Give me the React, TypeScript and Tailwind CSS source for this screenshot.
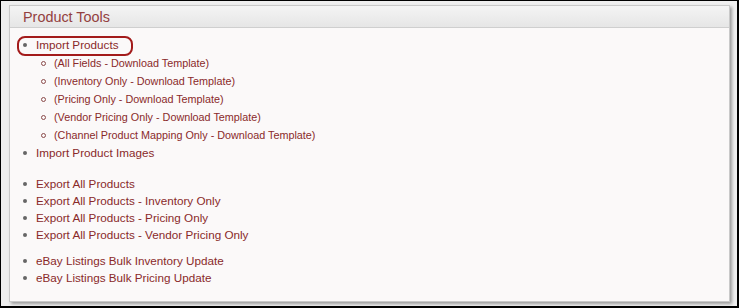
const importTemplates = [
  "(All Fields - Download Template)",
  "(Inventory Only - Download Template)",
  "(Pricing Only - Download Template)",
  "(Vendor Pricing Only - Download Template)",
  "(Channel Product Mapping Only - Download Template)",
];

const exportLinks = [
  "Export All Products",
  "Export All Products - Inventory Only",
  "Export All Products - Pricing Only",
  "Export All Products - Vendor Pricing Only",
];

const ebayLinks = ["eBay Listings Bulk Inventory Update", "eBay Listings Bulk Pricing Update"];

function Item({ label, h = "h-[18px] leading-[18px]", sub = false }: { label: string; h?: string; sub?: boolean }) {
  return (
    <li className={`flex items-center ${h} ${sub ? "pl-[31px] text-[10.8px]" : "pl-[13px] text-[11.7px]"}`}>
      {sub ? (
        <span className="mr-[8px] h-[5px] w-[5px] rounded-full border border-[#8a4a4a]" />
      ) : (
        <span className="mr-[9px] h-[4px] w-[4px] rounded-full bg-[#666]" />
      )}
      <a className="cursor-pointer text-[#8a2a2a]">{label}</a>
    </li>
  );
}

export default function App() {
  return (
    <div
      className="h-[308px] w-[739px] border border-r-2 border-b-2 border-black bg-[#efefef] pl-[8px] pt-[4px]"
      style={{ fontFamily: '"Liberation Sans", Arial, sans-serif' }}
    >
      <div className="h-[297px] w-[721px] border border-[#c9c9c9] bg-[#fbf9f9] shadow-[2px_2px_3px_rgba(0,0,0,0.35)]">
        <div className="h-[22px] border-b border-[#cfcfcf] bg-gradient-to-b from-[#f4f4f4] to-[#e6e6e6] pl-[13px] text-[14.4px] leading-[22px] text-[#934040]">
          Product Tools
        </div>
        <ul className="pt-[8px]">
          <li className="relative">
            <div className="pointer-events-none absolute left-[7px] top-0 h-[20px] w-[116px] rounded-[8px] border-2 border-[#a31b1b]" />
            <Item label="Import Products" />
          </li>
          {importTemplates.map((t) => (
            <Item key={t} label={t} sub />
          ))}
          <Item label="Import Product Images" />
        </ul>
        <ul className="pt-[13px]">
          {exportLinks.map((t) => (
            <Item key={t} label={t} h="h-[17px] leading-[17px]" />
          ))}
        </ul>
        <ul className="pt-[9px]">
          {ebayLinks.map((t) => (
            <Item key={t} label={t} h="h-[17px] leading-[17px]" />
          ))}
        </ul>
      </div>
    </div>
  );
}
